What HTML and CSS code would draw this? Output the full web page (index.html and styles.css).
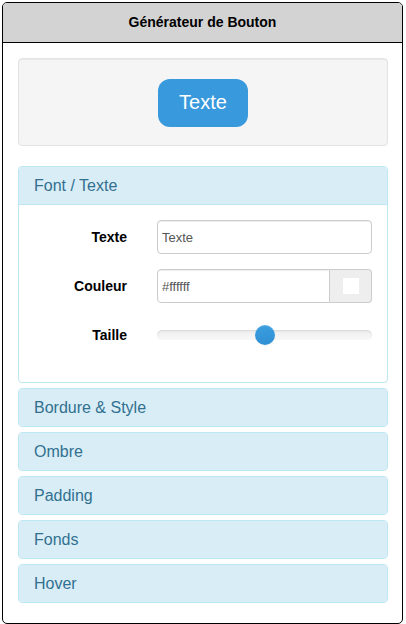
FILE: index.html
```html
<!DOCTYPE html>
<html lang="fr">
<head>
<meta charset="utf-8">
<title>Générateur de Bouton</title>
<link rel="stylesheet" href="styles.css">
</head>
<body>
<div class="frame">
  <div class="frame-header">Générateur de Bouton</div>
  <div class="frame-body">
    <div class="well">
      <button class="preview-btn" type="button">Texte</button>
    </div>
    <div class="panel-group">
      <div class="panel open">
        <div class="panel-heading">Font / Texte</div>
        <div class="panel-body">
          <div class="form-group">
            <label class="label-col">Texte</label>
            <div class="control-col"><input class="input" type="text" value="Texte"></div>
          </div>
          <div class="form-group">
            <label class="label-col">Couleur</label>
            <div class="control-col">
              <div class="input-group">
                <input class="input grouped" type="text" value="#ffffff">
                <span class="addon"><span class="swatch"></span></span>
              </div>
            </div>
          </div>
          <div class="form-group">
            <label class="label-col">Taille</label>
            <div class="control-col">
              <div class="slider">
                <div class="track"></div>
                <div class="thumb" style="left: 50%"></div>
              </div>
            </div>
          </div>
        </div>
      </div>
      <div class="panel"><div class="panel-heading">Bordure &amp; Style</div></div>
      <div class="panel"><div class="panel-heading">Ombre</div></div>
      <div class="panel"><div class="panel-heading">Padding</div></div>
      <div class="panel"><div class="panel-heading">Fonds</div></div>
      <div class="panel"><div class="panel-heading">Hover</div></div>
    </div>
  </div>
</div>
</body>
</html>
```

FILE: styles.css
```css
* { box-sizing: border-box; }
html, body { margin: 0; padding: 0; background: #fff; }
body {
  padding: 2px;
  font-family: "Liberation Sans", Arial, sans-serif;
  color: #333;
}
.frame {
  width: 401px;
  border: 1px solid #000;
  border-radius: 5px;
  overflow: hidden;
}
.frame-header {
  height: 40px;
  background: #d3d3d3;
  border-bottom: 1px solid #000;
  font-weight: bold;
  font-size: 14px;
  color: #000;
  display: flex;
  align-items: center;
  justify-content: center;
  padding-bottom: 1px;
}
.frame-body {
  padding: 15px 14px 0 15px;
}
.well {
  height: 88px;
  background: #f5f5f5;
  border: 1px solid #e3e3e3;
  border-radius: 4px;
  box-shadow: inset 0 1px 1px rgba(0,0,0,.05);
  display: flex;
  align-items: center;
  justify-content: center;
  margin-bottom: 20px;
}
.preview-btn {
  width: 90px;
  height: 48px;
  background: #3899dc;
  border: none;
  border-radius: 12px;
  color: #fff;
  font-family: "Liberation Sans", Arial, sans-serif;
  font-size: 20px;
  padding: 0;
  margin-top: 1px;
}
.panel-group { padding-bottom: 20px; display: flex; flex-direction: column; gap: 5px; }
.panel {
  border: 1px solid #bce8f1;
  border-radius: 4px;
  background: #fff;
  overflow: hidden;
}
.panel-heading {
  height: 37px;
  padding: 0 15px;
  background: #d9edf7;
  color: #31708f;
  font-size: 16px;
  line-height: 37px;
}
.panel.open .panel-heading {
  height: 38px;
  border-bottom: 1px solid #bce8f1;
}
.panel-body {
  padding: 15px;
}
.form-group {
  display: flex;
  height: 34px;
  margin-bottom: 15px;
}
.label-col {
  width: 93px;
  flex: none;
  text-align: right;
  font-weight: bold;
  font-size: 14px;
  color: #000;
  line-height: 34px;
}
.control-col {
  flex: 1;
  margin-left: 30px;
  position: relative;
}
.input {
  width: 100%;
  height: 34px;
  border: 1px solid #ccc;
  border-radius: 4px;
  padding: 0 4px;
  font-family: "Liberation Sans", Arial, sans-serif;
  font-size: 13px;
  color: #555;
  box-shadow: inset 0 1px 1px rgba(0,0,0,.075);
}
.input-group { display: flex; height: 34px; }
.input.grouped {
  flex: 1;
  border-radius: 4px 0 0 4px;
  min-width: 0;
}
.addon {
  width: 42px;
  flex: none;
  background: #eee;
  border: 1px solid #ccc;
  border-left: 0;
  border-radius: 0 4px 4px 0;
  display: flex;
  align-items: center;
  justify-content: center;
}
.swatch {
  width: 16px;
  height: 16px;
  background: #fff;
}
.slider {
  position: relative;
  height: 34px;
}
.track {
  position: absolute;
  left: 0;
  right: 0;
  top: 12px;
  height: 10px;
  border-radius: 5px;
  background: linear-gradient(#eee, #f8f8f8);
  box-shadow: inset 0 1px 2px rgba(0,0,0,.1);
}
.thumb {
  position: absolute;
  top: 7px;
  width: 20px;
  height: 20px;
  margin-left: -10px;
  border-radius: 50%;
  background: linear-gradient(#3b9edf, #2f8fd3);
  box-shadow: inset 0 1px 0 rgba(255,255,255,.2), 0 1px 2px rgba(0,0,0,.05);
}
```
